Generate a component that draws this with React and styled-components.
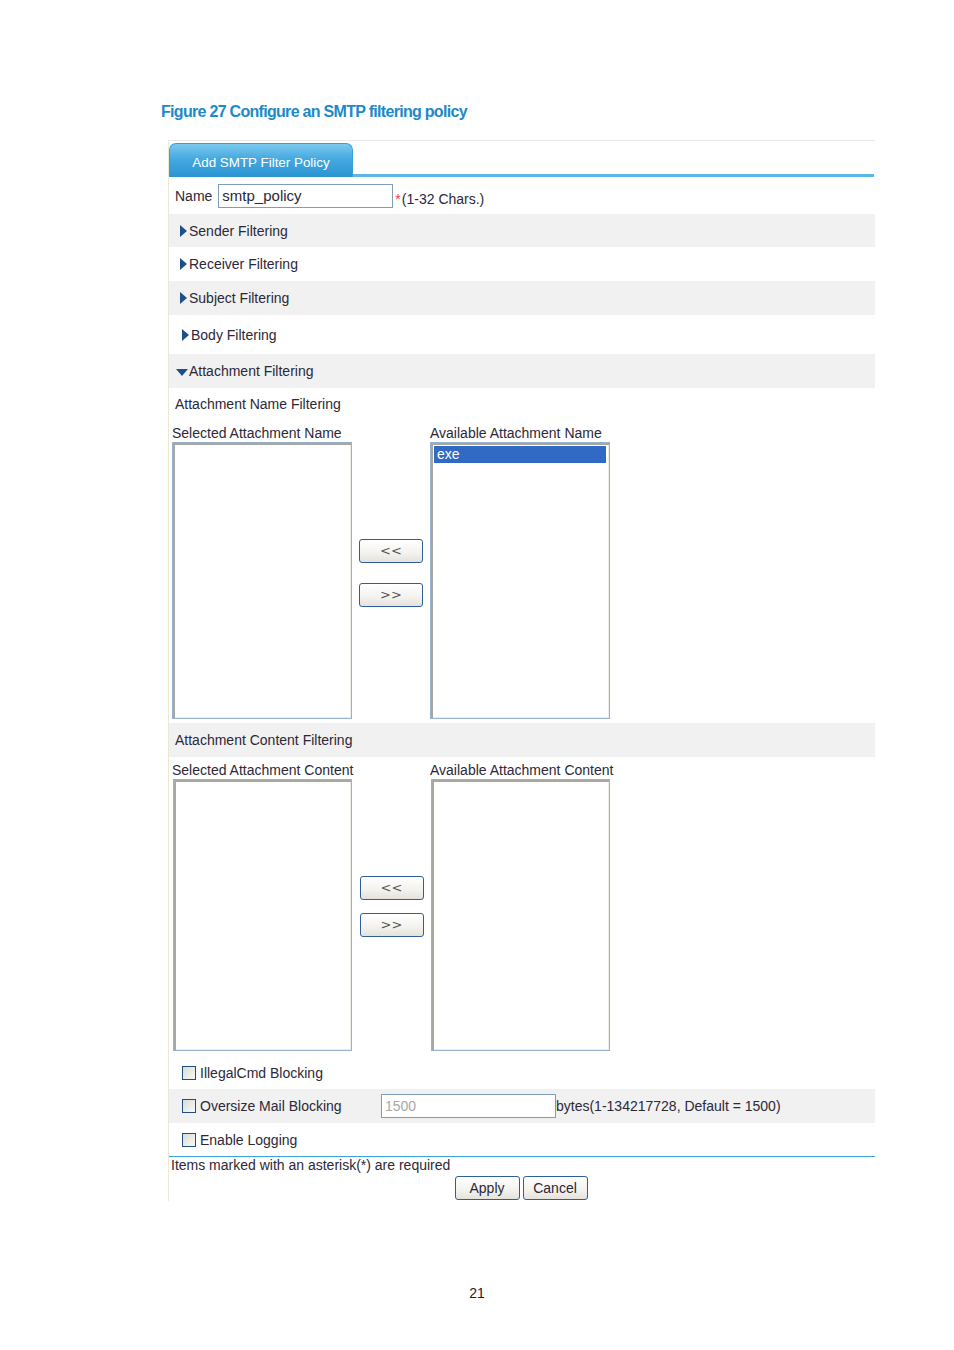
import React from "react";
import styled, { createGlobalStyle } from "styled-components";

const GlobalStyle = createGlobalStyle`
  body {
    margin: 0;
    background: #fff;
    font-family: "Liberation Sans", Arial, sans-serif;
  }
`;

const App = () => {
  return (
    <Page>
      <GlobalStyle />
      <Caption>Figure 27 Configure an SMTP filtering policy</Caption>
      <Panel>
        <TabBar>
          <Tab>Add SMTP Filter Policy</Tab>
        </TabBar>

        <Row height={37} indent={6}>
          <Text>Name</Text>
          <NameInput defaultValue="smtp_policy" />
          <Hint>
            <Star>*</Star>(1-32 Chars.)
          </Hint>
        </Row>

        <Row height={33} indent={11} shade>
          <ArrowRight />
          <Text>Sender Filtering</Text>
        </Row>
        <Row height={34} indent={11}>
          <ArrowRight />
          <Text>Receiver Filtering</Text>
        </Row>
        <Row height={34} indent={11} shade>
          <ArrowRight />
          <Text>Subject Filtering</Text>
        </Row>
        <Row height={39} indent={13}>
          <ArrowRight />
          <Text>Body Filtering</Text>
        </Row>
        <Row height={34} indent={7} shade>
          <ArrowDown />
          <Text>Attachment Filtering</Text>
        </Row>

        <Row height={32} indent={6}>
          <Text>Attachment Name Filtering</Text>
        </Row>
        <Transfer listHeight={277} offset={0}>
          <ListLabel>Selected Attachment Name</ListLabel>
          <span />
          <ListLabel>Available Attachment Name</ListLabel>
          <ListBox />
          <MoveButtons gap={20} lift={16}>
            <ArrowButton>&lt;&lt;</ArrowButton>
            <ArrowButton>&gt;&gt;</ArrowButton>
          </MoveButtons>
          <ListBox>
            <Option selected>exe</Option>
          </ListBox>
        </Transfer>

        <Row height={34} indent={6} shade top={4}>
          <Text>Attachment Content Filtering</Text>
        </Row>
        <Transfer listHeight={272} offset={1}>
          <ListLabel>Selected Attachment Content</ListLabel>
          <span />
          <ListLabel>Available Attachment Content</ListLabel>
          <ListBox />
          <MoveButtons gap={13} lift={18}>
            <ArrowButton>&lt;&lt;</ArrowButton>
            <ArrowButton>&gt;&gt;</ArrowButton>
          </MoveButtons>
          <ListBox />
        </Transfer>

        <Row height={33} indent={13} top={5}>
          <Check />
          <Text>IllegalCmd Blocking</Text>
        </Row>
        <Row height={34} indent={13} shade>
          <Check />
          <CheckLabel>Oversize Mail Blocking</CheckLabel>
          <SizeInput defaultValue="1500" />
          <Text>bytes(1-134217728, Default = 1500)</Text>
        </Row>
        <Row height={33} indent={13}>
          <Check />
          <Text>Enable Logging</Text>
        </Row>

        <Footer>
          <Note>Items marked with an asterisk(*) are required</Note>
          <Actions>
            <ActionButton>Apply</ActionButton>
            <ActionButton>Cancel</ActionButton>
          </Actions>
        </Footer>
      </Panel>
      <PageNumber>21</PageNumber>
    </Page>
  );
};

export default App;

const Page = styled.div`
  width: 954px;
  height: 1350px;
  padding-top: 102px;
  box-sizing: border-box;
  color: #2c2838;
  font-size: 14px;
`;
const Caption = styled.h1`
  margin: 0 0 0 161px;
  font: bold 16px/20px "Liberation Sans", Arial, sans-serif;
  letter-spacing: -0.7px;
  color: #1b8ac9;
`;
const Panel = styled.div`
  margin: 18px 0 0 168px;
  width: 706px;
  border-top: 1px solid #e9e9e9;
  border-left: 1px solid #ebe8d4;
`;
const TabBar = styled.div`
  display: flex;
  align-items: flex-end;
  height: 31px;
  padding-top: 2px;
  border-bottom: 3px solid #5db6e5;
  margin-right: 1px;
`;
const Tab = styled.div`
  width: 184px;
  height: 34px;
  margin-bottom: -3px;
  padding-top: 3px;
  box-sizing: border-box;
  display: flex;
  align-items: center;
  justify-content: center;
  border-radius: 7px 7px 0 0;
  border: 1px solid #3a9fd6;
  border-bottom: none;
  background: linear-gradient(#7cc9ef, #45a9df 45%, #2a94d3);
  color: #fff;
  font-size: 13.4px;
`;
const Row = styled.div`
  display: flex;
  align-items: center;
  height: ${(p) => p.height}px;
  margin-top: ${(p) => p.top || 0}px;
  padding-left: ${(p) => p.indent}px;
  background: ${(p) => (p.shade ? "#f1f1f1" : "transparent")};
  white-space: nowrap;
`;
const Text = styled.span`
  font-size: 14px;
`;
const NameInput = styled.input`
  width: 175px;
  height: 24px;
  margin-left: 6px;
  box-sizing: border-box;
  border: 1px solid #7f9db9;
  padding: 0 3px;
  font: 15px "Liberation Sans", Arial, sans-serif;
  color: #2c2838;
  outline: none;
`;
const Hint = styled.span`
  margin: 6px 0 0 2px;
  font-size: 14px;
`;
const Star = styled.span`
  color: #e8384f;
  margin-right: 1px;
`;
const ArrowRight = styled.span`
  width: 0;
  height: 0;
  margin-right: 2px;
  border-top: 6px solid transparent;
  border-bottom: 6px solid transparent;
  border-left: 7px solid #1d4f8c;
`;
const ArrowDown = styled.span`
  width: 0;
  height: 0;
  margin: 2px 1px 0 0;
  border-left: 6px solid transparent;
  border-right: 6px solid transparent;
  border-top: 7px solid #1d4f8c;
`;
const Transfer = styled.div`
  display: grid;
  grid-template-columns: 180px 78px 180px;
  grid-template-rows: 22px ${(p) => p.listHeight}px;
  padding-left: 3px;

  & > :nth-child(n + 4) {
    margin-left: ${(p) => p.offset}px;
  }
`;
const ListLabel = styled.div`
  align-self: end;
  padding-bottom: 1px;
  font-size: 14px;
  white-space: nowrap;
`;
const ListBox = styled.div`
  border: 1px solid #98b1cc;
  box-shadow: inset 2px 2px 0 #a9a8a0, inset -1px -1px 0 #efeee6;
  background: #fff;
  padding: 3px 3px;
`;
const Option = styled.div`
  height: 17px;
  line-height: 17px;
  padding-left: 3px;
  font-size: 14px;
  background: ${(p) => (p.selected ? "#316ac5" : "transparent")};
  color: ${(p) => (p.selected ? "#fff" : "inherit")};
`;
const MoveButtons = styled.div`
  display: flex;
  flex-direction: column;
  align-items: center;
  justify-content: center;
  gap: ${(p) => p.gap}px;
  padding-bottom: ${(p) => p.lift}px;
`;
const ArrowButton = styled.button`
  width: 64px;
  height: 24px;
  padding: 0;
  border: 1px solid #2f5f9a;
  border-radius: 3px;
  background: linear-gradient(#ffffff, #f3f2ee 60%, #e4e2da);
  color: #555;
  font: 13px "DejaVu Sans", sans-serif;
  letter-spacing: 0px;
`;
const Check = styled.span`
  width: 12px;
  height: 12px;
  margin-right: 4px;
  border: 1px solid #1e4f7e;
  background: linear-gradient(135deg, #dcdcd6, #f8f8f6);
`;
const CheckLabel = styled.span`
  width: 181px;
  font-size: 14px;
`;
const SizeInput = styled.input`
  width: 175px;
  height: 24px;
  box-sizing: border-box;
  border: 1px solid #7f9db9;
  padding: 0 3px;
  font: 14px "Liberation Sans", Arial, sans-serif;
  color: #a8a8a8;
  outline: none;
`;
const Footer = styled.div`
  border-top: 1px solid #3aa6dd;
  padding-bottom: 1px;
`;
const Note = styled.div`
  height: 17px;
  line-height: 17px;
  padding-left: 2px;
  font-size: 14px;
`;
const Actions = styled.div`
  display: flex;
  justify-content: center;
  gap: 3px;
  margin-top: 2px;
  padding-right: 2px;
`;
const ActionButton = styled.button`
  width: 65px;
  height: 24px;
  padding: 0;
  border: 1px solid #2f5f9a;
  border-radius: 3px;
  background: linear-gradient(#ffffff, #f3f2ee 60%, #e4e2da);
  color: #2c2838;
  font: 14px "Liberation Sans", Arial, sans-serif;
`;
const PageNumber = styled.div`
  margin-top: 84px;
  text-align: center;
  font-size: 14px;
  line-height: 16px;
  color: #222;
`;
